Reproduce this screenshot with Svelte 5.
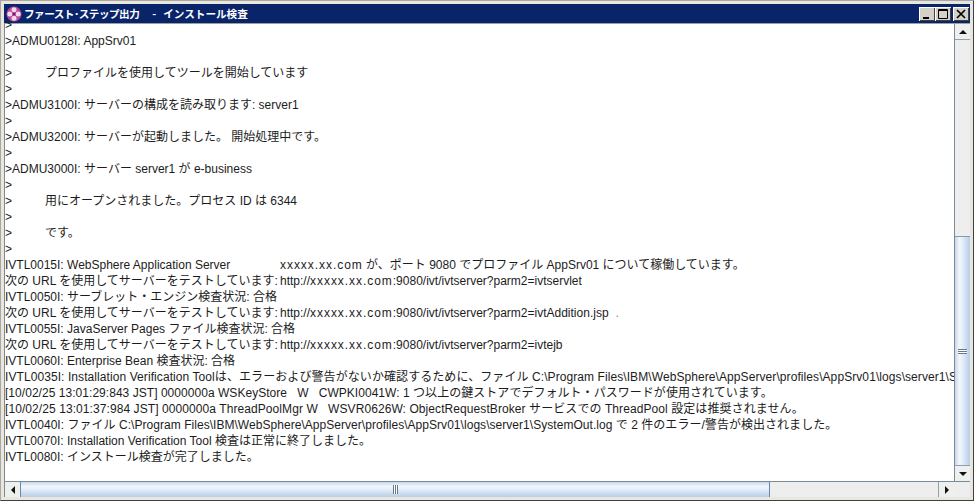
<script>
  const host = 'xxxxx.xx.com';
  const lines = [
    { t: '>' },
    { t: '>ADMU0128I: AppSrv01' },
    { t: '>' },
    { t: '>', b: 'プロファイルを使用してツールを開始しています' },
    { t: '>' },
    { t: '>ADMU3100I: サーバーの構成を読み取ります: server1' },
    { t: '>' },
    { t: '>ADMU3200I: サーバーが起動しました。 開始処理中です。' },
    { t: '>' },
    { t: '>ADMU3000I: サーバー server1 が e-business' },
    { t: '>' },
    { t: '>', b: '用にオープンされました。プロセス ID は 6344' },
    { t: '>' },
    { t: '>', b: 'です。' },
    { t: '>' },
    { t: 'IVTL0015I: WebSphere Application Server', pre: '', after: ' が、ポート 9080 でプロファイル AppSrv01 について稼働しています。' },
    { t: '次の URL を使用してサーバーをテストしています:', pre: 'http://', after: ':9080/ivt/ivtserver?parm2=ivtservlet' },
    { t: 'IVTL0050I: サーブレット・エンジン検査状況: 合格' },
    { t: '次の URL を使用してサーバーをテストしています:', pre: 'http://', after: ':9080/ivt/ivtserver?parm2=ivtAddition.jsp', dot: true },
    { t: 'IVTL0055I: JavaServer Pages ファイル検査状況: 合格' },
    { t: '次の URL を使用してサーバーをテストしています:', pre: 'http://', after: ':9080/ivt/ivtserver?parm2=ivtejb' },
    { t: 'IVTL0060I: Enterprise Bean 検査状況: 合格' },
    { t: 'IVTL0035I: Installation Verification Toolは、エラーおよび警告がないか確認するために、ファイル C:\\Program Files\\IBM\\WebSphere\\AppServer\\profiles\\AppSrv01\\logs\\server1\\SystemOut.log', wide: true },
    { t: '[10/02/25 13:01:29:843 JST] 0000000a WSKeyStore   W   CWPKI0041W: 1 つ以上の鍵ストアでデフォルト・パスワードが使用されています。', slight: true },
    { t: '[10/02/25 13:01:37:984 JST] 0000000a ThreadPoolMgr W   WSVR0626W: ObjectRequestBroker サービスでの ThreadPool 設定は推奨されません。', wide: true },
    { t: 'IVTL0040I: ファイル C:\\Program Files\\IBM\\WebSphere\\AppServer\\profiles\\AppSrv01\\logs\\server1\\SystemOut.log で 2 件のエラー/警告が検出されました。', slight: true },
    { t: 'IVTL0070I: Installation Verification Tool 検査は正常に終了しました。' },
    { t: 'IVTL0080I: インストール検査が完了しました。' }
  ];
</script>

<div class="window">
  <header class="titlebar">
    <svg class="logo" width="16" height="16" viewBox="0 0 16 16" aria-hidden="true">
      <circle cx="8" cy="8" r="7.5" fill="#b8479a" />
      <circle cx="8" cy="3.8" r="2.5" fill="#f3d6ea" />
      <circle cx="8" cy="12.2" r="2.5" fill="#f3d6ea" />
      <circle cx="3.8" cy="8" r="2.5" fill="#f3d6ea" />
      <circle cx="12.2" cy="8" r="2.5" fill="#f3d6ea" />
      <circle cx="8" cy="8" r="1.5" fill="#6f2a70" />
    </svg>
    <span class="title first">ファースト･ステップ出力</span>
    <span class="title sep">-</span>
    <span class="title">インストール検査</span>
    <div class="controls">
      <button class="ctl" aria-label="最小化">
        <svg width="16" height="14" viewBox="0 0 16 14"><rect x="4" y="10" width="6" height="2" fill="#000" /></svg>
      </button>
      <button class="ctl" aria-label="最大化">
        <svg width="16" height="14" viewBox="0 0 16 14"><path d="M3.5 2.5h9v9h-9zM3.5 3.5h9" fill="none" stroke="#000" /></svg>
      </button>
      <button class="ctl close" aria-label="閉じる">
        <svg width="16" height="14" viewBox="0 0 16 14"><path d="M4 3l8 8M12 3l-8 8" fill="none" stroke="#000" stroke-width="1.7" /></svg>
      </button>
    </div>
  </header>

  <div class="body">
    <div class="main">
      <div class="log">
        {#each lines as l}
          <div class="row" class:wide={l.wide} class:slight={l.slight}>{l.t}{#if l.b}<span class="tab">{l.b}</span>{/if}{#if l.after}<span class="col">{l.pre}<span class="host">{host}</span>{l.after}{#if l.dot}<span class="dot">.</span>{/if}</span>{/if}</div>
        {/each}
      </div>
      <div class="vbar">
        <div class="vbtn"><span class="up"></span></div>
        <div class="vempty"></div>
        <div class="vthumb">
          <span class="grip-h"></span>
        </div>
        <div class="vbtn bottom"><span class="down"></span></div>
      </div>
    </div>
    <div class="hrow">
      <div class="hbar">
        <div class="hbtn"><span class="left"></span></div>
        <div class="hthumb"><span class="grip-v"></span></div>
        <div class="hempty"></div>
        <div class="hbtn right-btn"><span class="right"></span></div>
      </div>
      <div class="corner"></div>
    </div>
  </div>
</div>

<style>
  :global(body) {
    margin: 0;
    background: #d4d0c8;
  }
  .window {
    width: 974px;
    height: 501px;
    box-sizing: border-box;
    padding: 3px;
    background: #e8e6df;
    border: 1px solid #a8a8a2;
    border-right-color: #404040;
    border-bottom-color: #404040;
    display: flex;
    flex-direction: column;
    overflow: hidden;
  }
  .titlebar {
    height: 19px;
    flex: none;
    background: #0a246a;
    display: flex;
    align-items: center;
    padding-left: 2px;
    color: #fff;
  }
  .logo {
    flex: none;
  }
  .title {
    margin-left: 2px;
    font: bold 10.6px "Noto Sans CJK JP", "Liberation Sans", sans-serif;
    line-height: 19px;
    white-space: pre;
  }
  .first {
    letter-spacing: -0.5px;
  }
  .sep {
    margin: 0 5px 0 13px;
  }
  .controls {
    margin-left: auto;
    display: flex;
    margin-right: 1px;
  }
  .ctl {
    width: 16px;
    height: 14px;
    padding: 0;
    border: 0;
    background: #d4d0c8;
    box-shadow: inset 1px 1px 0 #fff, inset -1px -1px 0 #404040;
    display: block;
  }
  .ctl svg {
    display: block;
  }
  .close {
    margin-left: 2px;
  }
  .body {
    flex: 1;
    min-height: 0;
    display: flex;
    flex-direction: column;
    border-top: 1px solid #9aa0a8;
    border-left: 1px solid #808890;
    background: #fff;
  }
  .main {
    flex: 1;
    min-height: 0;
    display: flex;
  }
  .log {
    flex: 1;
    min-width: 0;
    overflow: hidden;
    font: 12px/16px "Liberation Sans", "Noto Sans CJK JP", sans-serif;
    color: #1c1c1c;
    margin-top: -7px;
  }
  .row {
    height: 16px;
    white-space: pre;
    position: relative;
  }
  .wide {
    letter-spacing: 0.08px;
  }
  .slight {
    letter-spacing: 0.04px;
  }
  .tab {
    margin-left: 33px;
  }
  .col {
    position: absolute;
    left: 275px;
  }
  .host {
    letter-spacing: 0.95px;
  }
  .dot {
    margin-left: 7px;
    color: #888;
  }
  .vbar {
    width: 16px;
    flex: none;
    display: flex;
    flex-direction: column;
    border-left: 1px solid #7a8a99;
    background: #eef1f3;
    box-sizing: border-box;
  }
  .vbtn {
    height: 16px;
    flex: none;
    display: flex;
    align-items: center;
    justify-content: center;
    background: #eef0ee;
    border-bottom: 1px solid #90a0b0;
    box-sizing: border-box;
  }
  .vbtn.bottom {
    border-bottom: 0;
    border-top: 1px solid #90a0b0;
  }
  .up {
    border: 4px solid transparent;
    border-top: 0;
    border-bottom: 4px solid #111;
  }
  .down {
    border: 4px solid transparent;
    border-bottom: 0;
    border-top: 4px solid #111;
  }
  .vempty {
    height: 196px;
    flex: none;
    background: #eeeeee;
    border-bottom: 1px solid #8a97a5;
  }
  .vthumb {
    flex: 1;
    background: linear-gradient(90deg, #c6d8ee 0%, #f3f7fc 30%, #dbe7f5 60%, #b6cde8 100%);
    display: flex;
    align-items: center;
    justify-content: center;
  }
  .grip-h {
    width: 9px;
    height: 5px;
    background: linear-gradient(#6d7885 0 1px, #fff 1px 2px, #6d7885 2px 3px, #fff 3px 4px, #6d7885 4px 5px);
  }
  .hrow {
    height: 15px;
    flex: none;
    display: flex;
    border-top: 1px solid #7a8a99;
  }
  .hbar {
    flex: 1;
    display: flex;
    min-width: 0;
  }
  .hbtn {
    width: 16px;
    flex: none;
    display: flex;
    align-items: center;
    justify-content: center;
    background: #eef0ee;
    border-right: 1px solid #6a87ad;
    box-sizing: border-box;
  }
  .hbtn.right-btn {
    border-right: 0;
    border-left: 1px solid #90a0b0;
  }
  .left {
    border: 4px solid transparent;
    border-left: 0;
    border-right: 4px solid #111;
  }
  .right {
    border: 4px solid transparent;
    border-right: 0;
    border-left: 4px solid #111;
  }
  .hthumb {
    width: 749px;
    flex: none;
    background: linear-gradient(180deg, #c6d8ee 0%, #f3f7fc 30%, #dbe7f5 60%, #b6cde8 100%);
    display: flex;
    align-items: center;
    justify-content: center;
    border-right: 1px solid #6a87ad;
    box-sizing: border-box;
  }
  .grip-v {
    width: 5px;
    height: 9px;
    background: linear-gradient(90deg, #6d7885 0 1px, #fff 1px 2px, #6d7885 2px 3px, #fff 3px 4px, #6d7885 4px 5px);
  }
  .hempty {
    flex: 1;
    background: #eeeeee;
  }
  .corner {
    width: 16px;
    flex: none;
    background: #eeeeee;
  }
</style>
